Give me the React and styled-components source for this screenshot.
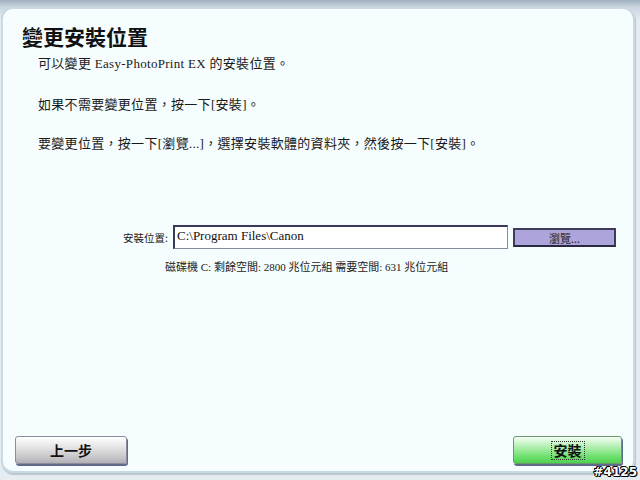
import React from "react";
import styled, { createGlobalStyle } from "styled-components";

const Global = createGlobalStyle`
  html, body { margin: 0; padding: 0; }
  body {
    width: 640px; height: 480px; overflow: hidden;
    background: linear-gradient(#9fb0c0 0px, #c9d5de 7px, #e6edf1 20px);
    font-family: "Noto Sans CJK TC", "Noto Sans", sans-serif;
  }
`;

const Screen = styled.div`
  position: relative;
  width: 640px;
  height: 480px;
  box-sizing: border-box;
  padding: 7px 5px 7px 1px;
  display: flex;
`;

const Panel = styled.div`
  flex: 1;
  display: flex;
  flex-direction: column;
  background: #f5fdfe;
  border: 2px solid #c7d9e2;
  border-radius: 12px;
  box-shadow: 1px 2px 1px #b8c6cf, inset 1px 1px 0 #ffffff;
  box-sizing: border-box;
`;

const Title = styled.h1`
  margin: 14px 0 0 19px;
  font-size: 21px;
  font-weight: bold;
  line-height: 26px;
  color: #111;
  font-family: "Noto Sans CJK TC", serif;
`;

const Text = styled.p`
  margin: ${p => p.$top}px 0 0 35px;
  font-size: 13px;
  letter-spacing: 0.3px;
  line-height: 16px;
  color: #1a1a1a;
  font-family: "Liberation Serif", "Noto Sans CJK TC", serif;
`;

const FormArea = styled.div`
  margin-top: 73px;
  display: flex;
  flex-direction: column;
`;

const Row = styled.div`
  display: flex;
  align-items: center;
  margin-left: 120px;
`;

const Label = styled.span`
  font-size: 10.5px;
  color: #222;
  width: 50px;
  font-family: "Noto Sans CJK TC", sans-serif;
`;

const Input = styled.div`
  width: 330px;
  height: 21px;
  background: #fff;
  border-style: solid;
  border-width: 2px 1px 1px 2px;
  border-color: #3a3a58 #8a8a9a #8a8a9a #3a3a58;
  font-family: "Liberation Serif", serif;
  font-size: 13px;
  line-height: 18px;
  padding-left: 2px;
  color: #111;
`;

const Browse = styled.button`
  margin-left: 5px;
  width: 103px;
  height: 19px;
  background: #aca4da;
  border: 2px solid #3e3c5a;
  border-bottom-color: #2a2840;
  font-size: 11px;
  color: #222;
  padding: 0;
  font-family: "Noto Sans CJK TC", sans-serif;
`;

const Disk = styled.div`
  margin: 9px 0 0 162px;
  font-size: 11px;
  color: #222;
  font-family: "Liberation Serif", "Noto Sans CJK TC", serif;
`;

const Spacer = styled.div`flex: 1;`;

const Footer = styled.div`
  display: flex;
  justify-content: space-between;
  padding: 0 11px 7px 12px;
`;

const NavButton = styled.button`
  width: ${p => p.$w}px;
  height: 28px;
  border-radius: 3px;
  border: 1px solid ${p => (p.$green ? "#6a9a6a" : "#8c8c9c")};
  box-shadow: 1px 2px 0 #5d6a8a;
  background: ${p =>
    p.$green
      ? "linear-gradient(#f4fff4 0%, #b6f0b6 35%, #6ee06e 75%, #4ed24e 100%)"
      : "linear-gradient(#ffffff 0%, #e4e4e4 40%, #c4c4c8 80%, #b0b0b6 100%)"};
  font-size: 14px;
  font-weight: bold;
  color: #111;
  font-family: "Noto Sans CJK TC", serif;
  display: flex;
  align-items: center;
  justify-content: center;
  padding: 0;
`;

const Focus = styled.span`
  border: 1px dotted #333;
  padding: 0 2px;
  line-height: 17px;
`;

const Badge = styled.div`
  position: absolute;
  right: 3px;
  bottom: 1px;
  font-family: "DejaVu Sans", sans-serif;
  font-weight: bold;
  font-size: 12px;
  color: #fff;
  text-shadow: -1px 0 #000, 1px 0 #000, 0 -1px #000, 0 1px #000, 1px 1px #000, -1px -1px #000;
`;

export default function App() {
  return (
    <>
      <Global />
      <Screen>
        <Panel>
          <Title>變更安裝位置</Title>
          <Text $top={7}>可以變更 Easy-PhotoPrint EX 的安裝位置。</Text>
          <Text $top={25}>如果不需要變更位置，按一下[安裝]。</Text>
          <Text $top={23}>要變更位置，按一下[瀏覽...]，選擇安裝軟體的資料夾，然後按一下[安裝]。</Text>
          <FormArea>
            <Row>
              <Label>安裝位置:</Label>
              <Input>C:\Program Files\Canon</Input>
              <Browse>瀏覽...</Browse>
            </Row>
            <Disk>磁碟機 C: 剩餘空間: 2800 兆位元組 需要空間: 631 兆位元組</Disk>
          </FormArea>
          <Spacer />
          <Footer>
            <NavButton $w={112}>上一步</NavButton>
            <NavButton $w={109} $green><Focus>安裝</Focus></NavButton>
          </Footer>
        </Panel>
        <Badge>#4125</Badge>
      </Screen>
    </>
  );
}
